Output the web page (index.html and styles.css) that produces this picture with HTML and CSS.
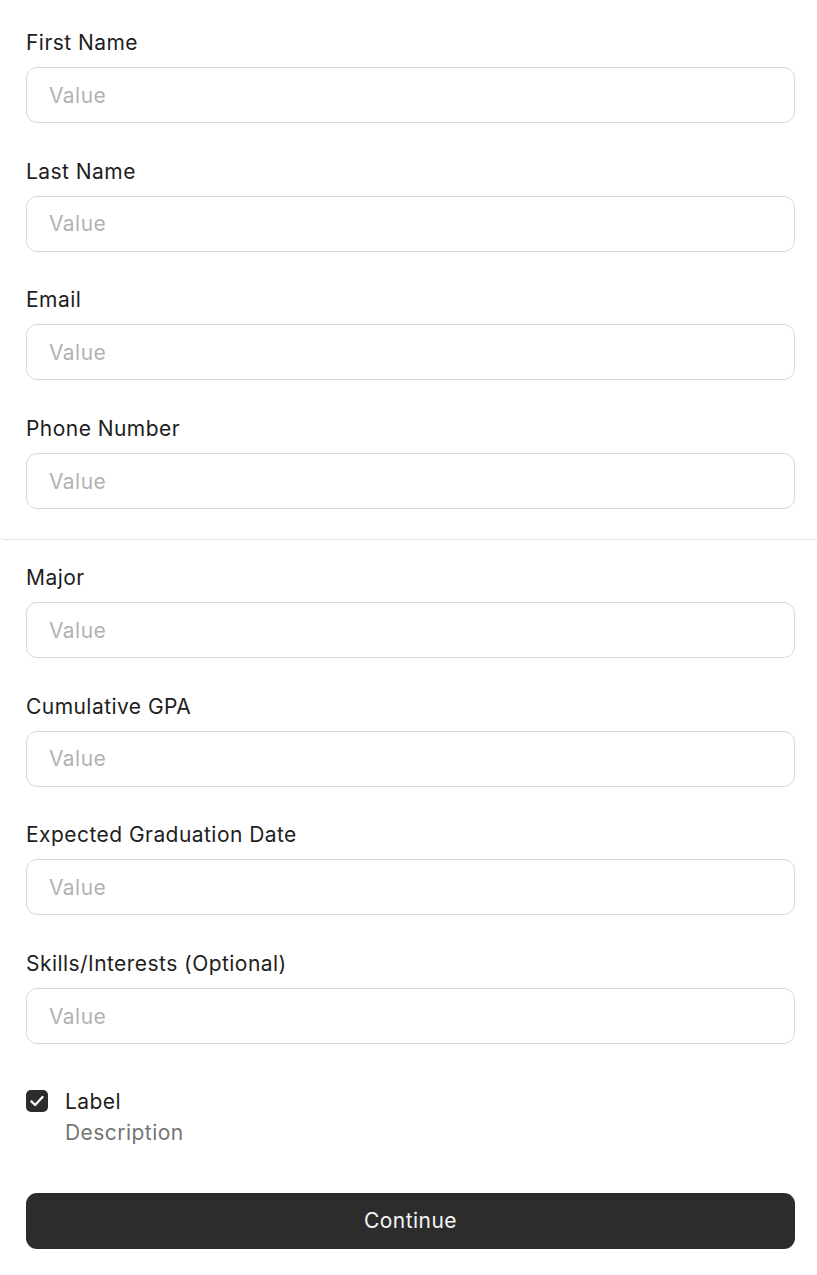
FILE: index.html
```html
<!DOCTYPE html>
<html lang="en">
<head>
<meta charset="utf-8">
<title>Form</title>
<link rel="stylesheet" href="styles.css">
</head>
<body>
<main class="page">
  <section class="section section-top">
    <div class="field">
      <label class="field-label">First Name</label>
      <input class="field-input" type="text" placeholder="Value">
    </div>
    <div class="field">
      <label class="field-label">Last Name</label>
      <input class="field-input" type="text" placeholder="Value">
    </div>
    <div class="field">
      <label class="field-label">Email</label>
      <input class="field-input" type="text" placeholder="Value">
    </div>
    <div class="field">
      <label class="field-label">Phone Number</label>
      <input class="field-input" type="text" placeholder="Value">
    </div>
  </section>
  <section class="section section-bottom">
    <div class="field">
      <label class="field-label">Major</label>
      <input class="field-input" type="text" placeholder="Value">
    </div>
    <div class="field">
      <label class="field-label">Cumulative GPA</label>
      <input class="field-input" type="text" placeholder="Value">
    </div>
    <div class="field">
      <label class="field-label">Expected Graduation Date</label>
      <input class="field-input" type="text" placeholder="Value">
    </div>
    <div class="field">
      <label class="field-label">Skills/Interests (Optional)</label>
      <input class="field-input" type="text" placeholder="Value">
    </div>
    <div class="check-row">
      <span class="check-box">
        <svg width="16" height="16" viewBox="0 0 16 16" fill="none"><path d="M2.4 8.4 L6.1 12 L13.6 4" stroke="#ffffff" stroke-width="2.3" stroke-linecap="round" stroke-linejoin="round"/></svg>
      </span>
      <div class="check-text">
        <div class="check-label">Label</div>
        <div class="check-desc">Description</div>
      </div>
    </div>
    <button class="btn" type="button">Continue</button>
  </section>
</main>
</body>
</html>
```

FILE: styles.css
```css
* { box-sizing: border-box; }
html, body { margin: 0; padding: 0; background: #ffffff; }
body {
  font-family: Inter, "Noto Sans", sans-serif;
  color: #1e1e1e;
}
.page { width: 817px; }
.section {
  display: flex;
  flex-direction: column;
  gap: 34.7px;
  padding-left: 26px;
  padding-right: 22px;
}
.section-top {
  padding-top: 29px;
  padding-bottom: 30px;
  border-bottom: 1px solid #e3e3e3;
  border-bottom-left-radius: 4px;
}
.section-bottom {
  padding-top: 24px;
}
.field {
  display: flex;
  flex-direction: column;
  gap: 10px;
}
.field-label {
  font-size: 21px;
  letter-spacing: 0.45px;
  line-height: 28px;
  color: #1e1e1e;
}
.field-input {
  height: 56px;
  border: 1px solid #d9d9d9;
  border-radius: 11px;
  padding: 0 22px;
  font-family: inherit;
  font-size: 21px;
  letter-spacing: 0.45px;
  color: #1e1e1e;
  background: #ffffff;
  outline: none;
}
.field-input::placeholder { color: #b3b3b3; }
.check-row {
  display: flex;
  gap: 17px;
  margin-top: 9px;
}
.check-box {
  width: 22px;
  height: 22px;
  margin-top: 2px;
  background: #2c2c2c;
  border-radius: 5px;
  display: flex;
  align-items: center;
  justify-content: center;
  flex: none;
}
.check-text { display: flex; flex-direction: column; gap: 3px; }
.check-label { font-size: 21px; letter-spacing: 0.45px; line-height: 28px; color: #1e1e1e; }
.check-desc { font-size: 21px; letter-spacing: 0.45px; line-height: 28px; color: #757575; }
.btn {
  margin-top: 11px;
  height: 56px;
  border: none;
  border-radius: 11px;
  background: #2c2c2c;
  color: #f5f5f5;
  font-family: inherit;
  font-size: 21px;
  letter-spacing: 0.45px;
  cursor: pointer;
}
```
